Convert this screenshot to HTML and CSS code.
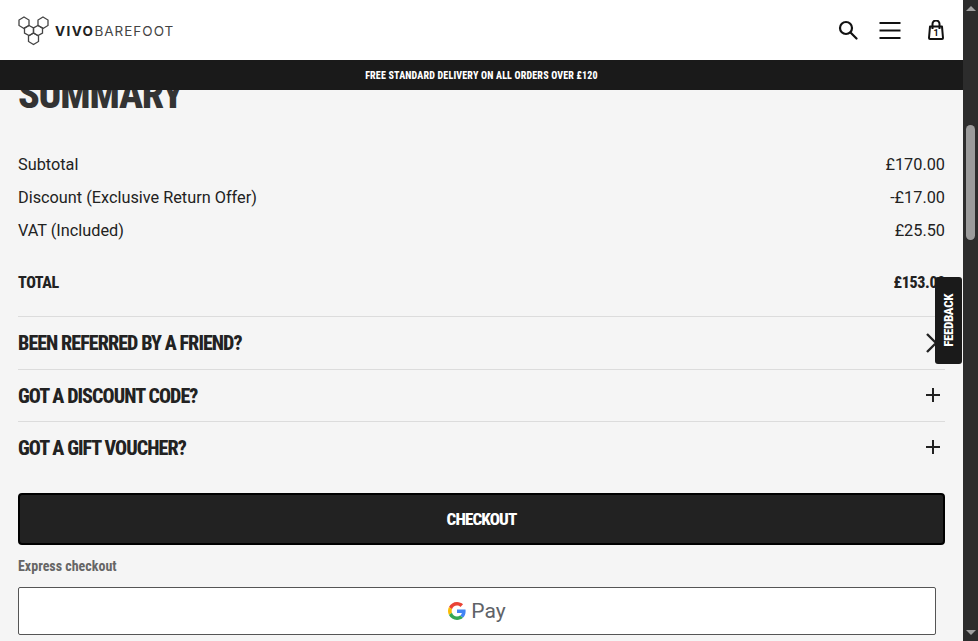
FILE: index.html
```html
<!DOCTYPE html>
<html lang="en">
<head>
    <meta charset="UTF-8">
    <meta name="viewport" content="width=device-width, initial-scale=1.0">
    <title>Basket - Vivobarefoot</title>
    <link rel="stylesheet" href="styles.css">
</head>
<body>
    <div class="page">
        <div class="site-header">
            <a class="logo">
                <svg class="logo-mark" width="32" height="30" viewBox="0 0 32 30" fill="none" stroke="#444" stroke-width="1.300">
                    <path d="M6 1 11 4 11 9.500 6 12.500 1 9.500 1 4Z"/>
                    <path d="M25 1 30 4 30 9.500 25 12.500 20 9.500 20 4Z"/>
                    <path d="M11 9.500 15.500 12 15.500 17 11 19.500 6.500 17 6.500 12Z"/>
                    <path d="M20 9.500 24.500 12 24.500 17 20 19.500 15.500 17 15.500 12Z"/>
                    <path d="M15.500 17 20.500 20 20.500 25.500 15.500 28.500 10.500 25.500 10.500 20Z"/>
                </svg>
                <span class="logo-text"><b>VIVO</b>BAREFOOT</span>
            </a>
            <div class="header-icons">
                <svg class="icon-search" width="20" height="20" viewBox="0 0 20 20" fill="none" stroke="#111" stroke-width="2.200">
                    <circle cx="8" cy="8" r="6"/>
                    <path d="M12.500 12.500 18.500 18.500" stroke-linecap="round"/>
                </svg>
                <svg class="icon-menu" width="22" height="18" viewBox="0 0 22 18" fill="none" stroke="#111" stroke-width="2">
                    <path d="M0.500 2H21.500M0.500 9.500H21.500M0.500 17H21.500"/>
                </svg>
                <div class="bag">
                    <svg width="16" height="20" viewBox="0 0 16 20" fill="none" stroke="#111" stroke-width="2">
                        <path d="M2 6.500H14L15 18A1 1 0 0 1 14 19H2A1 1 0 0 1 1 18Z" stroke-linejoin="round"/>
                        <path d="M4.500 9V4A3.500 3.500 0 0 1 11.500 4V9"/>
                    </svg>
                    <span class="bag-count">1</span>
                </div>
            </div>
        </div>
        <div class="promo-bar">FREE STANDARD DELIVERY ON ALL ORDERS OVER £120</div>

        <main class="summary">
            <h1>SUMMARY</h1>

            <div class="summary-lines">
                <div class="line"><span>Subtotal</span><span>£170.00</span></div>
                <div class="line"><span>Discount (Exclusive Return Offer)</span><span>-£17.00</span></div>
                <div class="line"><span>VAT (Included)</span><span>£25.50</span></div>
            </div>
            <div class="total"><span>TOTAL</span><span>£153.00</span></div>

            <div class="accordion">
                <div class="accordion-row">
                    <span>BEEN REFERRED BY A FRIEND?</span>
                    <svg class="icon-close" width="20" height="20" viewBox="0 0 20 20" stroke="#222" stroke-width="2.400">
                        <path d="M1 1 19 19M19 1 1 19"/>
                    </svg>
                </div>
                <div class="accordion-row">
                    <span>GOT A DISCOUNT CODE?</span>
                    <svg class="icon-plus" width="14" height="14" viewBox="0 0 14 14" stroke="#222" stroke-width="2">
                        <path d="M7 0V14M0 7H14"/>
                    </svg>
                </div>
                <div class="accordion-row">
                    <span>GOT A GIFT VOUCHER?</span>
                    <svg class="icon-plus" width="14" height="14" viewBox="0 0 14 14" stroke="#222" stroke-width="2">
                        <path d="M7 0V14M0 7H14"/>
                    </svg>
                </div>
            </div>

            <button class="checkout-button">CHECKOUT</button>
            <div class="express-label">Express checkout</div>
            <button class="gpay-button">
                <svg width="18" height="18" viewBox="0 0 48 48">
                    <path fill="#EA4335" d="M24 9.500c3.540 0 6.710 1.220 9.210 3.600l6.850-6.850C35.900 2.380 30.470 0 24 0 14.620 0 6.510 5.380 2.560 13.220l7.980 6.190C12.430 13.720 17.740 9.500 24 9.500z"/>
                    <path fill="#4285F4" d="M46.980 24.550c0-1.570-.15-3.090-.38-4.550H24v9.020h12.940c-.58 2.960-2.260 5.480-4.780 7.180l7.730 6c4.510-4.180 7.090-10.360 7.090-17.650z"/>
                    <path fill="#FBBC05" d="M10.530 28.590c-.48-1.450-.76-2.990-.76-4.590s.27-3.140.76-4.590l-7.980-6.190C.92 16.460 0 20.120 0 24c0 3.880.92 7.540 2.560 10.780l7.970-6.190z"/>
                    <path fill="#34A853" d="M24 48c6.480 0 11.930-2.130 15.890-5.810l-7.730-6c-2.150 1.450-4.920 2.300-8.160 2.300-6.260 0-11.570-4.220-13.470-9.910l-7.980 6.190C6.510 42.620 14.620 48 24 48z"/>
                </svg>
                <span>Pay</span>
            </button>
        </main>

        <div class="feedback-tab"><span>FEEDBACK</span></div>
    </div>

    <div class="scrollbar">
        <div class="arrow-up"></div>
        <div class="scroll-thumb"></div>
        <div class="arrow-down"></div>
    </div>
</body>
</html>
```

FILE: styles.css
```css
* {
    margin: 0;
    padding: 0;
    box-sizing: border-box;
}

body {
    font-family: Roboto, 'Liberation Sans', sans-serif;
    background-color: #f5f5f5;
    color: #222222;
    height: 100vh;
    overflow: hidden;
    display: flex;
}

.page {
    flex: 1;
    min-width: 0;
    position: relative;
    display: flex;
    flex-direction: column;
}

.site-header {
    height: 60px;
    flex-shrink: 0;
    background: #ffffff;
    display: flex;
    align-items: center;
    justify-content: space-between;
    padding: 0 18px;
}

.logo {
    display: flex;
    align-items: center;
    gap: 5px;
}

.logo-mark {
    display: block;
    margin-top: 2px;
}

.logo-text {
    font-family: Inter, 'Liberation Sans', sans-serif;
    font-size: 13.500px;
    letter-spacing: 1px;
    color: #444444;
    margin-top: 2px;
}

.logo-text b {
    color: #222222;
    letter-spacing: 1.400px;
}

.header-icons {
    display: flex;
    align-items: center;
    gap: 21px;
    padding-right: 1px;
}

.icon-search,
.icon-menu {
    display: block;
}

.icon-menu {
    margin-right: 7px;
}

.bag {
    position: relative;
    height: 20px;
    margin-left: -1px;
}

.bag svg {
    display: block;
}

.bag-count {
    position: absolute;
    left: 0;
    right: 0;
    top: 8px;
    text-align: center;
    font-size: 9px;
    line-height: 10px;
    font-weight: 700;
    color: #111111;
}

.promo-bar {
    height: 30px;
    flex-shrink: 0;
    background: #1a1a1a;
    color: #ffffff;
    display: flex;
    align-items: center;
    justify-content: center;
    font-family: 'Roboto Condensed', 'Open Sans', sans-serif;
    font-stretch: 75%;
    font-size: 10px;
    font-weight: 800;
    letter-spacing: 0.170px;
}

.summary {
    flex: 1;
    min-height: 0;
    overflow: hidden;
    padding: 0 18px;
}

.summary h1 {
    font-family: 'Roboto Condensed', 'Open Sans', sans-serif;
    font-stretch: 75%;
    font-size: 40px;
    font-weight: 800;
    letter-spacing: -1.200px;
    line-height: 46px;
    margin-top: -18px;
    color: #333333;
}

.summary-lines {
    margin-top: 30px;
    font-size: 16.300px;
}

.line {
    display: flex;
    justify-content: space-between;
    height: 33px;
    line-height: 33px;
}

.total {
    display: flex;
    justify-content: space-between;
    align-items: center;
    height: 20px;
    margin-top: 25px;
    font-family: 'Roboto Condensed', 'Open Sans', sans-serif;
    font-stretch: 75%;
    font-size: 16px;
    font-weight: 800;
    letter-spacing: -0.350px;
}

.accordion {
    margin-top: 24px;
}

.accordion-row {
    height: 52.500px;
    border-top: 1px solid #dcdcdc;
    display: flex;
    align-items: center;
    justify-content: space-between;
    font-family: 'Roboto Condensed', 'Open Sans', sans-serif;
    font-stretch: 75%;
    font-size: 20px;
    font-weight: 800;
    letter-spacing: -0.920px;
    padding-top: 1px;
}

.icon-plus {
    margin-right: 5px;
    margin-top: -2px;
}

.icon-close {
    margin-right: -1px;
}

.checkout-button {
    display: block;
    width: 100%;
    height: 52px;
    margin-top: 19px;
    background: #222222;
    color: #ffffff;
    border: 2px solid #000000;
    border-radius: 4px;
    font-family: 'Roboto Condensed', 'Open Sans', sans-serif;
    font-stretch: 75%;
    font-size: 17px;
    font-weight: 800;
    letter-spacing: -0.850px;
}

.express-label {
    margin-top: 12px;
    height: 18px;
    line-height: 18px;
    font-family: 'Roboto Condensed', 'Open Sans', sans-serif;
    font-stretch: 75%;
    font-size: 14px;
    font-weight: 700;
    color: #666666;
}

.gpay-button {
    display: flex;
    align-items: center;
    justify-content: center;
    gap: 5px;
    width: 918px;
    height: 48px;
    margin-top: 12px;
    background: #ffffff;
    border: 1.500px solid #555555;
    border-radius: 2px;
    font-family: Roboto, sans-serif;
    font-size: 21px;
    color: #5f6368;
}

.feedback-tab {
    position: absolute;
    right: 1px;
    top: 277px;
    width: 27px;
    height: 87px;
    background: #1a1a1a;
    border-radius: 3px;
    color: #ffffff;
    display: flex;
    align-items: center;
    justify-content: center;
}

.feedback-tab span {
    writing-mode: vertical-rl;
    transform: rotate(180deg);
    font-family: 'Roboto Condensed', 'Open Sans', sans-serif;
    font-stretch: 75%;
    font-size: 13px;
    font-weight: 800;
    letter-spacing: -0.400px;
}

.scrollbar {
    width: 15px;
    flex-shrink: 0;
    background: #2c2c2c;
    display: flex;
    flex-direction: column;
    align-items: center;
    position: relative;
}

.arrow-up,
.arrow-down {
    width: 0;
    height: 0;
    border-left: 5px solid transparent;
    border-right: 5px solid transparent;
}

.arrow-up {
    margin-top: 6px;
    border-bottom: 5px solid #a0a0a0;
}

.arrow-down {
    margin-bottom: 6px;
    border-top: 5px solid #a0a0a0;
}

.scroll-thumb {
    width: 9px;
    height: 115px;
    margin-top: 114px;
    margin-bottom: auto;
    background: #9b9b9b;
    border-radius: 5px;
}
```
